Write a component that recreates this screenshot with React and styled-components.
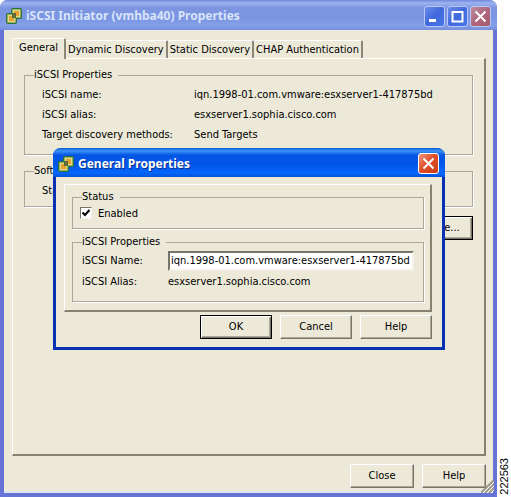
import { useState } from "react";
import styled, { createGlobalStyle } from "styled-components";

const GlobalStyle = createGlobalStyle`
  * {
    box-sizing: border-box;
  }

  body {
    margin: 0;
    background: #fff;
    color: #000;
    font: 11px/14px "DejaVu Sans Condensed", "Noto Sans", sans-serif;
  }

  button, input {
    font: inherit;
    color: inherit;
  }
`;

const Page = styled.main`
  position: relative;
  display: flex;
  min-height: 100vh;
`;

const Window = styled.section`
  flex: 1;
  display: flex;
  flex-direction: column;
  border: 4px solid #6675d5;
  border-top: 0;
  border-radius: 8px 8px 0 0;
  box-shadow: inset 0 -2px #dfe3ee;
  background: linear-gradient(#7c92e4 30px, #ece9d8 30px);
`;

const TitleBar = styled.header`
  display: flex;
  align-items: center;
  gap: 4px;
  height: ${({ $active }) => ($active ? "29px" : "30px")};
  margin: 0 -4px;
  padding: 2px 6px 0 ${({ $active }) => ($active ? "5px" : "6px")};
  border-radius: 8px 8px 0 0;
  color: ${({ $active }) => ($active ? "#fff" : "#d8e4f8")};
  background: ${({ $active }) =>
    $active
      ? "linear-gradient(#0a5ad0, #3c93f7 3px, #0456e4 7px, #0254e8 16px, #0467fc 25px, #0450d8)"
      : "linear-gradient(#7186dc, #9db4f0 3px, #7d95e0 8px, #7b95e3 18px, #84a0e8 25px, #788ddc)"};

  h1 {
    flex: 1;
    margin: 0;
    font: bold 12px/18px "Noto Sans", "Open Sans", sans-serif;
    text-shadow: ${({ $active }) => ($active ? "1px 1px #10308c" : "none")};
  }
`;

const Controls = styled.div`
  display: flex;
  gap: 2px;
`;

const ControlButton = styled.button`
  display: flex;
  width: 21px;
  height: 21px;
  padding: 0;
  border: 1px solid ${({ $active }) => ($active ? "#fff" : "#b9c8f4")};
  border-radius: 3px;
  background: ${({ $close, $active }) => {
    if ($active) return "linear-gradient(135deg, #ec9880, #e0502c 45%, #c83c14)";
    return $close
      ? "linear-gradient(135deg, #bc8ca0, #b0677d 50%, #a4586c)"
      : "linear-gradient(135deg, #6c8ce8, #4068dc 50%, #4878ec)";
  }};
`;

const Body = styled.div`
  flex: 1;
  display: flex;
  flex-direction: column;
  padding: 8px 7px 5px 8px;
`;

const TabList = styled.div`
  display: flex;
  align-items: flex-end;
  height: 20px;
`;

const Tab = styled.button`
  height: ${({ $selected }) => ($selected ? "21px" : "18px")};
  margin-bottom: ${({ $selected }) => ($selected ? "-1px" : "0")};
  padding: 0 ${({ $selected }) => ($selected ? "6px 2px" : "2px 0")};
  border: 1px solid #fff;
  border-width: 1px 2px 0 ${({ $selected }) => ($selected ? "1px" : "0")};
  border-right-color: #8a8778;
  border-radius: 2px 2px 0 0;
  background: #ece9d8;
  white-space: nowrap;
  z-index: ${({ $selected }) => ($selected ? 1 : 0)};
`;

const Panel = styled.div`
  flex: ${({ $grow }) => ($grow ? 1 : "none")};
  display: flex;
  flex-direction: column;
  gap: ${({ $grow }) => ($grow ? "9px" : "6px")};
  padding: ${({ $grow }) => ($grow ? "9px 11px 8px" : "5px 6px 8px 7px")};
  border: 1px solid #fff;
  border-right: 2px solid #85826f;
  border-bottom: 2px solid #85826f;
`;

const Group = styled.fieldset`
  min-width: 0;
  margin: 0;
  padding: ${({ $pad }) => $pad};
  border: 1px solid #aca899;
  box-shadow: 1px 1px #fff;

  legend {
    padding: 0 6px 0 0;
  }
`;

const Details = styled.dl`
  display: grid;
  grid-template-columns: 152px 1fr;
  grid-auto-rows: 20px;
  align-items: center;
  margin: 0;
  padding-left: 8px;

  dd {
    margin: 0;
  }
`;

const FormRow = styled.div`
  display: grid;
  grid-template-columns: 86px 1fr;
  align-items: center;
  height: 21px;
`;

const TextInput = styled.input`
  width: 100%;
  height: 20px;
  padding: 0 1px;
  border: 2px solid;
  border-color: #77746a #f4f2e8 #f4f2e8 #77746a;
  background: #fff;
`;

const CheckRow = styled.label`
  display: flex;
  align-items: center;
  gap: 6px;
  height: 20px;
`;

const Checkbox = styled.input`
  appearance: none;
  width: 12px;
  height: 12px;
  margin: 0 0 2px -2px;
  border: 1px solid #77746a;
  border-right-color: #f4f2e8;
  border-bottom-color: #f4f2e8;
  background: #fff;

  &:checked {
    background: #fff
      url("data:image/svg+xml,%3Csvg xmlns='http://www.w3.org/2000/svg' viewBox='0 0 10 10'%3E%3Cpath d='M1.5 4.5L4 7l4.5-5' fill='none' stroke='%23000' stroke-width='2'/%3E%3C/svg%3E");
  }
`;

const Button = styled.button`
  width: ${({ $width }) => $width || "64px"};
  height: 24px;
  padding: 0;
  border: 1px solid;
  border-color: #fff #77746a #77746a #fff;
  box-shadow: inset -1px -1px #aca899;
  background: #ece9d8;

  ${({ $default }) =>
    $default &&
    `
    border-color: #000;
    box-shadow: inset 1px 1px #fff, inset -1px -1px #77746a, inset -2px -2px #aca899;
  `}
`;

const Actions = styled.div`
  display: flex;
  justify-content: flex-end;
  gap: 8px;
  padding-top: ${({ $top }) => $top};
`;

const Grip = styled.svg`
  position: absolute;
  right: 17px;
  bottom: 4px;
`;

const Dialog = styled.section`
  position: absolute;
  top: 148px;
  left: 53px;
  right: 66px;
  z-index: 2;
  border: 3px solid #0831b4;
  border-top: 0;
  border-radius: 8px 8px 0 0;
  background: #ece9d8;

  header {
    margin: 0 -3px;
  }
`;

const DialogBody = styled.div`
  padding: 7px 10px 8px 8px;
`;

const FigureNumber = styled.aside`
  align-self: flex-end;
  width: 14px;
  padding-top: 2px;
  writing-mode: vertical-rl;
  transform: rotate(180deg);
  font: 11px/14px "Liberation Sans", Arial, sans-serif;
`;

const AppIcon = () => (
  <svg width="16" height="16" viewBox="0 0 16 16" aria-hidden="true">
    <g fill="#2f6f3c">
      <rect x="5" y="0" width="11" height="11" rx="2" />
      <rect x="0" y="5" width="11" height="11" rx="2" />
    </g>
    <g fill="#8fb45c">
      <rect x="6" y="1" width="9" height="9" rx="1" />
      <rect x="1" y="6" width="9" height="9" rx="1" />
    </g>
    <rect x="7.5" y="2.5" width="6" height="6" fill="#e8a030" stroke="#e4d890" />
    <rect x="2.5" y="7.5" width="6" height="6" fill="#e8a030" stroke="#e4d890" />
    <path d="M6.5 9.5v-4h3v4z" fill="#8a6a34" stroke="#3f6a38" />
  </svg>
);

const Glyph = ({ d, width = 2 }) => (
  <svg width="19" height="19" viewBox="0 0 19 19" aria-hidden="true">
    <path d={d} fill="none" stroke="#fff" strokeWidth={width} />
  </svg>
);

const closePath = "M4.5 4.5l10 10M14.5 4.5l-10 10";

const tabs = ["General", "Dynamic Discovery", "Static Discovery", "CHAP Authentication"];

const GeneralDialog = () => {
  const [enabled, setEnabled] = useState(true);
  const [name, setName] = useState("iqn.1998-01.com.vmware:esxserver1-417875bd");

  return (
    <Dialog role="dialog" aria-label="General Properties">
      <TitleBar $active>
        <AppIcon />
        <h1>General Properties</h1>
        <ControlButton $close $active aria-label="Close dialog">
          <Glyph d={closePath} />
        </ControlButton>
      </TitleBar>
      <DialogBody>
        <Panel>
          <Group $pad="0 9px 4px">
            <legend>Status</legend>
            <CheckRow>
              <Checkbox type="checkbox" checked={enabled} onChange={(e) => setEnabled(e.target.checked)} />
              Enabled
            </CheckRow>
          </Group>
          <Group $pad="1px 9px 9px">
            <legend>iSCSI Properties</legend>
            <FormRow>
              <label htmlFor="iscsi-name">iSCSI Name:</label>
              <TextInput id="iscsi-name" value={name} onChange={(e) => setName(e.target.value)} />
            </FormRow>
            <FormRow>
              <span>iSCSI Alias:</span>
              <span>esxserver1.sophia.cisco.com</span>
            </FormRow>
          </Group>
        </Panel>
        <Actions $top="3px">
          <Button $width="72px" $default>OK</Button>
          <Button $width="72px">Cancel</Button>
          <Button $width="72px">Help</Button>
        </Actions>
      </DialogBody>
    </Dialog>
  );
};

const App = () => {
  const [selected, setSelected] = useState("General");

  return (
    <Page>
      <GlobalStyle />
      <Window>
        <TitleBar>
          <AppIcon />
          <h1>iSCSI Initiator (vmhba40) Properties</h1>
          <Controls>
            <ControlButton aria-label="Minimize">
              <Glyph d="M4 13.5h7" width={3} />
            </ControlButton>
            <ControlButton aria-label="Maximize">
              <Glyph d="M4 5h11M4.5 4v10.5h10V4" width={2} />
            </ControlButton>
            <ControlButton $close aria-label="Close window">
              <Glyph d={closePath} />
            </ControlButton>
          </Controls>
        </TitleBar>
        <Body>
          <TabList role="tablist">
            {tabs.map((tab) => (
              <Tab
                key={tab}
                role="tab"
                aria-selected={tab === selected}
                $selected={tab === selected}
                onClick={() => setSelected(tab)}
              >
                {tab}
              </Tab>
            ))}
          </TabList>
          <Panel $grow>
            <Group $pad="3px 9px 9px">
              <legend>iSCSI Properties</legend>
              <Details>
                <dt>iSCSI name:</dt>
                <dd>iqn.1998-01.com.vmware:esxserver1-417875bd</dd>
                <dt>iSCSI alias:</dt>
                <dd>esxserver1.sophia.cisco.com</dd>
                <dt>Target discovery methods:</dt>
                <dd>Send Targets</dd>
              </Details>
            </Group>
            <Group $pad="3px 9px 5px">
              <legend>Software</legend>
              <Details>
                <dt>Status:</dt>
                <dd>Enabled</dd>
              </Details>
            </Group>
            <Actions $top="0">
              <Button $width="84px" $default>Configure...</Button>
            </Actions>
          </Panel>
          <Actions $top="8px">
            <Button>Close</Button>
            <Button>Help</Button>
          </Actions>
        </Body>
      </Window>
      <FigureNumber>222563</FigureNumber>
      <Grip width="13" height="13" viewBox="0 0 13 13" aria-hidden="true">
        <path d="M0 13L13 0M4 13l9-9M8 13l5-5" stroke="#9c998a" strokeWidth="2" />
        <path d="M2 13L13 2M6 13l7-7M10 13l3-3" stroke="#fff" />
      </Grip>
      <GeneralDialog />
    </Page>
  );
};

export default App;
